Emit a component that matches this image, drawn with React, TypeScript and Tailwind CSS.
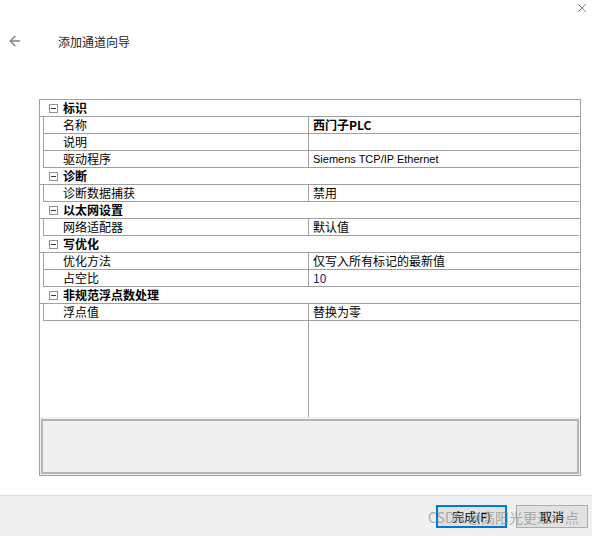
import React from 'react';
import { ArrowLeft, X } from 'lucide-react';

type Row = { label: string; value?: string; bold?: boolean };
type Category = { title: string; rows: Row[] };

const categories: Category[] = [
  {
    title: '标识',
    rows: [
      { label: '名称', value: '西门子PLC', bold: true },
      { label: '说明', value: '' },
      { label: '驱动程序', value: 'Siemens TCP/IP Ethernet' },
    ],
  },
  { title: '诊断', rows: [{ label: '诊断数据捕获', value: '禁用' }] },
  { title: '以太网设置', rows: [{ label: '网络适配器', value: '默认值' }] },
  {
    title: '写优化',
    rows: [
      { label: '优化方法', value: '仅写入所有标记的最新值' },
      { label: '占空比', value: '10' },
    ],
  },
  { title: '非规范浮点数处理', rows: [{ label: '浮点值', value: '替换为零' }] },
];

const font = { fontFamily: '"Noto Sans CJK SC", "Liberation Sans", sans-serif' };

const MinusBox = () => (
  <div className="w-[9px] h-[9px] border border-[#919191] bg-white flex items-center justify-center">
    <div className="w-[5px] h-px bg-[#333]" />
  </div>
);

const CategoryRow = ({ title }: { title: string }) => (
  <div className="h-[17px] flex items-center border-b border-[#a0a0a0]">
    <div className="w-[23px] flex justify-center pl-[3px]">
      <MinusBox />
    </div>
    <span className="text-[12px] font-bold text-black leading-none">{title}</span>
  </div>
);

const PropRow = ({ row }: { row: Row }) => (
  <div className="h-[17px] flex">
    <div className="w-[3px]" />
    <div className="flex-1 flex border-l border-b border-[#a0a0a0] mr-px">
      <div className="w-[265px] border-r border-[#a0a0a0] pl-[19px] flex items-center text-[12px] text-black leading-none">
        {row.label}
      </div>
      <div
        className={`flex-1 pl-[4px] flex items-center text-[12px] leading-none ${row.bold ? 'font-bold' : ''} ${
          row.label === '占空比' ? 'text-[#1a1a66]' : 'text-black'
        }`}
        style={row.label === '驱动程序' ? { fontFamily: '"Liberation Sans", sans-serif', fontSize: 11 } : undefined}
      >
        {row.value}
      </div>
    </div>
  </div>
);

export default function App() {
  return (
    <div className="w-[592px] h-[536px] bg-white relative flex flex-col" style={font}>
      <div className="absolute right-[3px] top-[1px] text-[#222]">
        <X size={14} strokeWidth={1} />
      </div>

      <div className="h-[99px] flex items-start pt-[33px]">
        <div className="pl-[7px] w-[58px] text-[#808080]">
          <ArrowLeft size={16} strokeWidth={2} />
        </div>
        <span className="text-[12px] text-[#222] leading-[14px] pt-[2px]">添加通道向导</span>
      </div>

      <div className="ml-[39px] w-[542px] h-[377px] border border-[#a0a0a0] flex flex-col">
        <div className="flex flex-col">
          {categories.map((c) => (
            <React.Fragment key={c.title}>
              <CategoryRow title={c.title} />
              {c.rows.map((r) => (
                <PropRow key={r.label} row={r} />
              ))}
            </React.Fragment>
          ))}
        </div>
        <div className="flex-1 flex">
          <div className="w-[269px] border-r border-[#a0a0a0]" />
        </div>
        <div className="h-[58px] bg-[#f0f0f0] pt-[2px] px-[1px] pb-px">
          <div className="h-full border-2 border-[#b4b4b4]" />
        </div>
      </div>

      <div className="mt-auto h-[41px] bg-[#f0f0f0] border-t border-[#dcdcdc] flex items-start justify-end pt-[9px] pr-[4px] gap-[9px] relative">
        <button className="w-[71px] h-[23px] border-2 border-[#0078d7] bg-[#e1e1e1] text-[12px] text-black leading-none">
          完成(F)
        </button>
        <button className="w-[72px] h-[23px] border border-[#adadad] bg-[#e1e1e1] text-[12px] text-black leading-none">
          取消
        </button>
        <span className="absolute left-[428px] top-[14px] text-[14px] text-[#8c8c8c]/70 leading-none whitespace-nowrap">
          CSDN @高阳光更近一点
        </span>
      </div>
    </div>
  );
}
